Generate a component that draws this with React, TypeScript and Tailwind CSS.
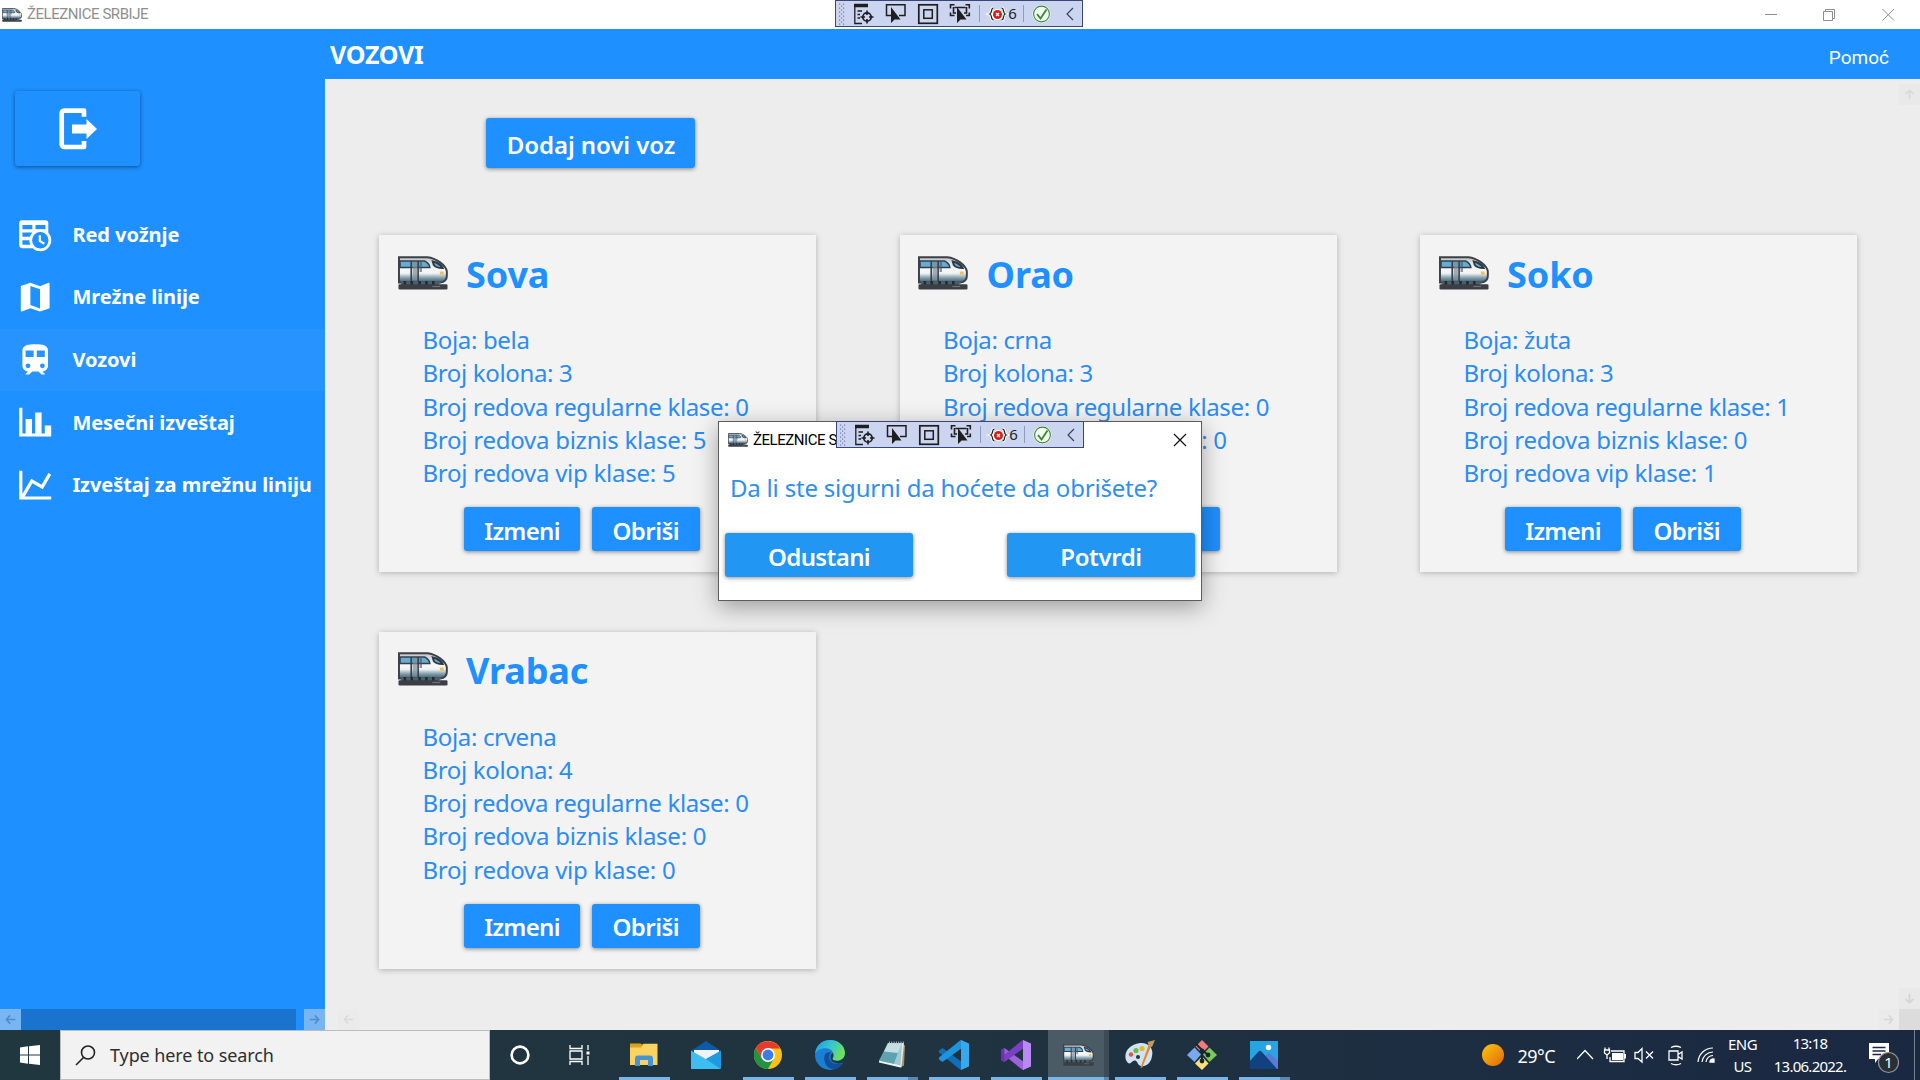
import React from "react";

function TrainIcon({ className }: { className: string }) {
  return (
    <svg className={className} viewBox="0 0 51 34" preserveAspectRatio="none">
      <defs>
        <linearGradient id="trainBody" x1="0" y1="0" x2="0" y2="1">
          <stop offset="0" stopColor="#b9bec4" />
          <stop offset="0.25" stopColor="#e4e7ea" />
          <stop offset="0.5" stopColor="#f7f7f7" />
          <stop offset="0.64" stopColor="#eef1f3" />
          <stop offset="0.82" stopColor="#7f9dab" />
          <stop offset="1" stopColor="#3f5a68" />
        </linearGradient>
      </defs>
      <path d="M1 1.200H30C39 2 49 9.500 49.800 15.500V20C49.800 23.500 47 26 43 26.500H1Z" fill="url(#trainBody)" stroke="#3d4046" strokeWidth="2" />
      <path d="M2 5H27C30 6 32.500 9 32.500 11.500H2Z" fill="#67acd3" stroke="#33414c" strokeWidth="1.600" />
      <path d="M35.500 5.500L39 6.500C42 8 44.500 10 45.500 12C42 12 38 11 36.500 9Z" fill="#6aaed6" stroke="#2b3a46" strokeWidth="2" />
      <path d="M13.500 5V25M20.500 5V25" stroke="#3a4048" strokeWidth="1.700" />
      <path d="M15 6H19.500V24H15Z" fill="#7b8f9b" opacity="0.700" />
      <path d="M22 6H24.500V16H22Z" fill="#47555f" opacity="0.600" />
      <path d="M42.500 15.500H46.500L47 18.800H43Z" fill="#f3c060" />
      <path d="M3 25.500H45L41 29H3Z" fill="#46606f" />
      <path d="M7 25V29.500M14 25V29.500M22 25V29.500M29 25V29.500M36 25V29.500" stroke="#252a30" strokeWidth="2.600" />
      <rect x="0.500" y="28.300" width="50" height="5.200" rx="1.200" fill="#3b3e43" />
      <path d="M35 30.500H43" stroke="#6d7278" strokeWidth="1.200" />
    </svg>
  );
}

function DebugBar() {
  return (
    <div className="flex h-[27px] w-[248px] border border-[#3b4678] bg-[#ccd5f0]">
      <svg width="246" height="25" viewBox="1 1 246 25" fill="none" stroke="#1e1e1e">
        <g fill="#6f7ba8" stroke="none">
          {[4, 8, 12, 16, 20, 24].map((y) => (
            <React.Fragment key={y}>
              <rect x="4" y={y - 0.5} width="1.200" height="1.200" />
              <rect x="8" y={y - 0.5} width="1.200" height="1.200" />
              {y < 24 && <rect x="6" y={y + 1.5} width="1.200" height="1.200" />}
            </React.Fragment>
          ))}
        </g>
        <path d="M19 5.500H33" strokeWidth="3.500" />
        <path d="M19.800 6V23.500H27M22.500 11H27M22.500 14.500H25M22.500 18H25" strokeWidth="1.300" />
        <circle cx="32" cy="17" r="4.200" strokeWidth="1.700" />
        <path d="M32 10.500V15M32 19V23.500M25.500 17H30M34 17H38.500" strokeWidth="1.600" />
        <path d="M56 15.500H51.500V4.700H70V15.500H64" strokeWidth="1.500" />
        <path d="M56 7V23L59.500 19.500H65.500Z" fill="#1e1e1e" stroke="none" />
        <rect x="83.800" y="4.800" width="18.500" height="18.500" strokeWidth="1.700" />
        <rect x="88.800" y="9.800" width="8.500" height="8.500" strokeWidth="1.500" />
        <path d="M115.500 8.500V4.700H119.500M130.500 4.700H134.300V8.500M115.500 12.500V15.500H119.500M134.300 12.500V15.500H131M119.500 7.500H130.500M118.500 7V13H121M131.500 7V13H129" strokeWidth="1.600" />
        <path d="M122 7V23L125.500 19.500H131.500Z" fill="#1e1e1e" stroke="none" />
        <path d="M144.500 5V22M188.500 5V22" stroke="#8c9ac4" strokeWidth="1" />
        <path d="M158.500 8C155.500 8 157.500 13 154.800 14C157.500 15 155.500 20 158.500 20M166.500 8C169.500 8 167.500 13 170.200 14C167.500 15 169.500 20 166.500 20" stroke="#fff" strokeWidth="3.200" />
        <path d="M158.500 8C155.500 8 157.500 13 154.800 14C157.500 15 155.500 20 158.500 20M166.500 8C169.500 8 167.500 13 170.200 14C167.500 15 169.500 20 166.500 20" strokeWidth="1.200" />
        <circle cx="162.500" cy="14.500" r="5.400" fill="#fff" stroke="none" />
        <circle cx="162.500" cy="14.500" r="4.500" fill="#d21f14" stroke="none" />
        <path d="M161 13L164 16M164 13L161 16" stroke="#fff" strokeWidth="1.300" />
        <circle cx="206.500" cy="14" r="9" fill="#fff" stroke="none" />
        <circle cx="206.500" cy="14" r="7.900" fill="#f4faf4" stroke="#388a34" strokeWidth="1.100" />
        <path d="M202 14L205.500 18.500L211.500 9.500" stroke="#388a34" strokeWidth="1.900" />
        <path d="M238 8L232 14L238 20" stroke="#3a4260" strokeWidth="1.200" />
        <text x="173.300" y="19.300" fontSize="15" fill="#1e1e1e" stroke="none" className="font-['Noto_Sans',sans-serif]">
          6
        </text>
      </svg>
    </div>
  );
}

const NAV = [
  { id: "clock", label: "Red vožnje" },
  { id: "map", label: "Mrežne linije" },
  { id: "train", label: "Vozovi", active: true },
  { id: "bar", label: "Mesečni izveštaj" },
  { id: "line", label: "Izveštaj za mrežnu liniju" },
];

const NAV_PATHS: Record<string, string> = {
  map: "M15,19L9,16.89V5L15,7.11M20.5,3C20.44,3 20.39,3 20.34,3L15,5.1L9,3L3.36,4.9C3.15,4.97 3,5.15 3,5.38V20.5A0.5,0.5 0 0,0 3.5,21C3.55,21 3.61,21 3.66,20.97L9,18.9L15,21L20.64,19.1C20.85,19 21,18.85 21,18.62V3.5A0.5,0.5 0 0,0 20.5,3Z",
  train:
    "M12,2C8,2 4,2.5 4,6V15.5A3.5,3.5 0 0,0 7.5,19L6,20.5V21H8.23L10.23,19H14L16,21H18V20.5L16.5,19A3.5,3.5 0 0,0 20,15.5V6C20,2.5 16.42,2 12,2M7.5,17A1.5,1.5 0 0,1 6,15.5A1.5,1.5 0 0,1 7.5,14A1.5,1.5 0 0,1 9,15.5A1.5,1.5 0 0,1 7.5,17M11,10H6V6H11V10M13,10V6H18V10H13M16.5,17A1.5,1.5 0 0,1 15,15.5A1.5,1.5 0 0,1 16.5,14A1.5,1.5 0 0,1 18,15.5A1.5,1.5 0 0,1 16.5,17Z",
  bar: "M22,21H2V3H4V19H6V10H10V19H12V6H16V19H18V14H22V21Z",
  line: "M16,11.78L20.24,4.45L21.97,5.45L16.74,14.5L10.23,10.75L5.46,19H22V21H2V3H4V17.54L9.5,8L16,11.78Z",
};

function NavIcon({ id }: { id: string }) {
  return (
    <svg className="size-[38.4px] shrink-0" viewBox="0 0 24 24" fill="#fff">
      {id === "clock" ? (
        <g transform="translate(0 -0.4)">
          <path
            fillRule="evenodd"
            d="M4 3H18.400A1.800 1.800 0 0 1 20.200 4.800V20.500H4A1.900 1.900 0 0 1 2 18.600V4.900A1.900 1.900 0 0 1 4 3ZM4 6V8.700H10.200V6ZM12.200 6V8.700H18.400V6ZM4 10.700V13.400H10.200V10.700ZM4 15.500V18.400H10.200V15.500Z"
          />
          <path d="M18 14H21V21H12V18Z" fill="#1e90ff" />
          <circle cx="15.200" cy="15.600" r="6" fill="#1e90ff" stroke="#fff" strokeWidth="1.700" />
          <path d="M14.900 12.500V16L17.700 17.700" fill="none" stroke="#fff" strokeWidth="1.400" />
        </g>
      ) : (
        <path d={NAV_PATHS[id]} />
      )}
    </svg>
  );
}

function Arrow({ dir, color }: { dir: "left" | "right" | "up" | "down"; color: string }) {
  const d = {
    left: "M15 8H2M7.500 2L2 8L7.500 14",
    right: "M1 8H14M8.500 2L14 8L8.500 14",
    up: "M8 15V2M2 7.500L8 2L14 7.500",
    down: "M8 1V14M2 8.500L8 14L14 8.500",
  }[dir];
  return (
    <svg className="size-[11px]" viewBox="0 0 16 16" fill="none" stroke={color} strokeWidth="2.200">
      <path d={d} />
    </svg>
  );
}

const TRAINS = [
  { name: "Sova", boja: "bela", kolona: 3, reg: 0, biz: 5, vip: 5 },
  { name: "Orao", boja: "crna", kolona: 3, reg: 0, biz: 0, vip: 0 },
  { name: "Soko", boja: "žuta", kolona: 3, reg: 1, biz: 0, vip: 1 },
  { name: "Vrabac", boja: "crvena", kolona: 4, reg: 0, biz: 0, vip: 0 },
];

const BTN =
  "flex items-center justify-center rounded-[3px] text-[24px] font-semibold text-white shadow-[0_1px_4px_rgba(0,0,0,0.45)]";

function Card({ t }: { t: (typeof TRAINS)[number] }) {
  return (
    <div className="flex h-[337px] w-[437px] flex-col bg-[#f3f3f3] text-[#1e90ff] shadow-[0_1px_6px_rgba(0,0,0,0.26)]">
      <div className="flex h-[88px] pl-[18.500px]">
        <TrainIcon className="mt-[20.500px] h-[34px] w-[50px]" />
        <h2 className="ml-[18.500px] mt-[15.500px] text-[36px] leading-[48px] font-bold tracking-[-0.1px]">{t.name}</h2>
      </div>
      <div className="pl-[43.500px] text-[24px] leading-[33.250px] tracking-[-0.34px] text-[#2a8cf4]">
        <p>Boja: {t.boja}</p>
        <p>Broj kolona: {t.kolona}</p>
        <p>Broj redova regularne klase: {t.reg}</p>
        <p className="tracking-[-0.25px]">Broj redova biznis klase: {t.biz}</p>
        <p className="tracking-[-0.25px]">Broj redova vip klase: {t.vip}</p>
      </div>
      <div className="mt-[17.750px] flex gap-3 pl-[85px]">
        <button className={`${BTN} h-[44px] w-[116px] bg-[#1e90ff] pt-[3px] tracking-[-0.7px]`}>Izmeni</button>
        <button className={`${BTN} h-[44px] w-[107.500px] bg-[#1e90ff] pt-[3px] tracking-[-0.5px]`}>Obriši</button>
      </div>
    </div>
  );
}

function AppIcon({ id }: { id: string }) {
  switch (id) {
    case "explorer":
      return (
        <svg width="30" height="30" viewBox="0 0 30 30">
          <path d="M1 6H12L14.500 3.800H28.500V25H1Z" fill="#fcd263" />
          <path d="M1 3.500H11.500L14 5L12 7.500H1Z" fill="#dfa01c" />
          <path d="M6 26V18.500A3 3 0 0 1 9 15.500H21A3 3 0 0 1 24 18.500V26H19V20H11V26Z" fill="#4595d2" />
        </svg>
      );
    case "mail":
      return (
        <svg width="30" height="30" viewBox="0 0 30 30">
          <path d="M0 11L15 1L30 11Z" fill="#0d5ba8" />
          <path d="M3 10H28V22H3Z" fill="#f1f2f4" />
          <path d="M30 10.500L13 20L30 29Z" fill="#1f9ae0" />
          <path d="M0 10.500L13 18L30 29H0Z" fill="#3dbef3" />
        </svg>
      );
    case "chrome":
      return (
        <svg width="28" height="28" viewBox="0 0 48 48">
          <circle cx="24" cy="24" r="24" fill="#fbc116" />
          <path d="M3.200 12A24 24 0 0 0 24 48L34 30L24 24L13.600 30Z" fill="#229342" />
          <path d="M3.200 12L13.600 30L24 13H44.800A24 24 0 0 0 3.200 12Z" fill="#e33b2e" />
          <circle cx="24" cy="24" r="12" fill="#fff" />
          <circle cx="24" cy="24" r="9.300" fill="#3a7de8" />
        </svg>
      );
    case "edge":
      return (
        <svg width="30" height="30" viewBox="0 0 30 30">
          <defs>
            <linearGradient id="edgeTop" x1="0" y1="0" x2="1" y2="0.400">
              <stop offset="0.100" stopColor="#1fa2e0" />
              <stop offset="0.550" stopColor="#35c6d0" />
              <stop offset="1" stopColor="#6ee05a" />
            </linearGradient>
          </defs>
          <circle cx="15" cy="15" r="15" fill="#1c7fd4" />
          <path d="M0 14C1 5 7 0 15 0C24 0 30 6 30 13C30 18 26 20.500 22 20.500C19 20.500 17 19.500 17.500 18C19.500 16 19 10 13 8.500C7 7.500 2 10 0 14Z" fill="url(#edgeTop)" />
          <path d="M9.500 16C8 23 13 30 20 29C24 28 27 25 28.500 22.500C24 25 18 24.500 15 20.500C13.500 18 14 14.500 16 12.500C13 11.500 10 13 9.500 16Z" fill="#104f9c" />
          <path d="M17.500 18.500C17 20 19 21 22 21C26 21 29 18.500 30 15V20.500L28.500 22.500C23 25 18 23 16 20C15 17 15.500 14 17.800 13C18.800 15 18.700 17 17.500 18.500Z" fill="#21373f" />
        </svg>
      );
    case "notepad":
      return (
        <svg width="30" height="30" viewBox="0 0 30 30">
          <path d="M25 4L28 5.500L27 25.500L24 27Z" fill="#b08e64" />
          <path d="M14 3H27L24.500 27.500L12 24Z" fill="#dfe9ea" />
          <path d="M11 3H25L17 24.500L2 20.500Z" fill="#5fa3b0" />
          <path d="M11 3H25L21 13L7 11.500Z" fill="#c3dfe3" />
          <path d="M21 13L25 4L23.500 26L17 24Z" fill="#9fcad1" />
          <path d="M2 20.500L23.500 25.500V27.500L2 22.500Z" fill="#eef3f3" />
          <path d="M12 2.500H27" stroke="#b5b9bb" strokeWidth="2" strokeDasharray="1 1.300" />
        </svg>
      );
    case "vscode":
    case "vs": {
      const c = id === "vs" ? ["#9c63dc", "#7a3fc4", "#b988f2"] : ["#0f6fb8", "#1f94dd", "#38a8ec"];
      return (
        <svg width="30" height="30" viewBox="0 0 30 30">
          <path d="M0 10.500L3.500 8L23 22V30L21 29.500L0 12.500Z" fill={c[0]} />
          <path d="M0 19.500L3.500 22L23 8V0L21 0.500L0 17.500Z" fill={c[1]} />
          {id === "vs" && <path d="M0 9.500L3.500 8V22L0 20.500Z" fill="#6a34ac" />}
          <path d="M22 0L30 3.500V26.500L22 30Z" fill={c[2]} />
        </svg>
      );
    }
    case "train":
      return <TrainIcon className="h-[22px] w-[31px]" />;
    case "paint":
      return (
        <svg width="30" height="30" viewBox="0 0 30 30">
          <path d="M15 3C23 2 29 8 27 16C26 24 20 27 16 26C12 25 13 21 10 20.500C7 20 6 25 3 23C-1 19 0 13 3 9C6 5.500 10 3.500 15 3Z" fill="#cfe3f2" />
          <circle cx="11" cy="10.500" r="2.600" fill="#6fba47" />
          <circle cx="17" cy="8.500" r="2.600" fill="#e8b92f" />
          <circle cx="6" cy="14.500" r="2.200" fill="#e0553d" />
          <circle cx="13" cy="17" r="2" fill="#1f3542" />
          <path d="M26.500 5L17 28L15.500 27.500L24 4Z" fill="#e08a2b" />
          <path d="M22.500 2L30 0L27 7L24 6Z" fill="#c49a63" />
        </svg>
      );
    case "git":
      return (
        <svg width="30" height="30" viewBox="0 0 30 30">
          <path d="M15 0L21.500 6.500L15 13L8.500 6.500Z" fill="#f27b7b" />
          <path d="M7.500 7.500L14 14.500L7.500 22L0 15Z" fill="#79a9ee" />
          <path d="M22.500 7.500L30 15L22.500 22L16 14.500Z" fill="#7cc957" />
          <path d="M15 16.500L21.500 23.500L15 30L8 23.500Z" fill="#f9e07a" />
          <path d="M9 4L15 10V22M15 10L21 15" stroke="#17262f" strokeWidth="2" fill="none" />
          <circle cx="15" cy="11" r="2.400" fill="#17262f" />
          <circle cx="21" cy="15" r="2.400" fill="#17262f" />
          <circle cx="15" cy="21" r="2.400" fill="#17262f" />
        </svg>
      );
    default:
      return (
        <svg width="28" height="28" viewBox="0 0 28 28">
          <rect width="28" height="28" fill="#27a4e4" />
          <path d="M12 18L19 11.500L28 20V28H12Z" fill="#5b7ad6" />
          <path d="M0 20L8.500 10.500C9.500 9.500 10.500 9.500 11.500 10.500L27 28H0Z" fill="#11417f" />
          <circle cx="18.500" cy="6.500" r="2.700" fill="#fff" />
        </svg>
      );
  }
}

const TASKS = [
  { id: "explorer" },
  { id: "mail", none: true },
  { id: "chrome" },
  { id: "edge" },
  { id: "notepad", multi: true },
  { id: "vscode" },
  { id: "vs" },
  { id: "train", active: true },
  { id: "paint" },
  { id: "git" },
  { id: "photos", multi: true },
] as { id: string; none?: boolean; multi?: boolean; active?: boolean }[];

function Taskbar() {
  return (
    <footer className="flex h-[50px] w-full bg-linear-to-r from-[#21373f] via-[#1f3340] to-[#1a2842] text-white">
      <div className="flex w-[60px] items-center justify-center">
        <svg width="20" height="20" viewBox="0 0 20 20" fill="#fff">
          <path d="M0 2.400L8 1.300V9.500H0ZM9 1.200L20 0V9.500H9ZM0 10.500H8V18.700L0 17.600ZM9 10.500H20V20L9 18.800Z" />
        </svg>
      </div>
      <div className="flex w-[430px] items-center border border-[#bdbdbd] bg-[#f2f2f2] pl-[14px]">
        <svg width="21" height="21" viewBox="0 0 21 21" fill="none" stroke="#222" strokeWidth="1.600">
          <circle cx="13" cy="7.500" r="6.500" />
          <path d="M8.500 12.500L1 20" />
        </svg>
        <span className="ml-[14px] text-[18px] tracking-[-0.1px] text-[#2e2e2e]">Type here to search</span>
      </div>
      <div className="flex w-[60px] items-center justify-center">
        <svg width="20" height="20" viewBox="0 0 20 20">
          <circle cx="10" cy="10" r="8.400" fill="none" stroke="#fff" strokeWidth="2.600" />
        </svg>
      </div>
      <div className="flex w-[60px] items-center justify-center">
        <svg width="22" height="20" viewBox="0 0 22 20" fill="none" stroke="#fff" strokeWidth="1.300">
          <path d="M1 0V3.500H13V0M1 20V16.500H13V20M1 6H13V14H1ZM19 0V5M19 11V20" />
          <rect x="17.500" y="6.500" width="3" height="3" fill="#fff" stroke="none" />
        </svg>
      </div>
      <div className="ml-[3px] flex">
        {TASKS.map((t) => (
          <div key={t.id} className="flex w-[62px] flex-col">
            <div
              className={
                t.active
                  ? "ml-px flex h-[47px] w-[61px] items-center justify-center border-r-[5px] border-[#3c4b56] bg-[#4b5b66] pl-[4px] pt-[3px]"
                  : "flex h-[47px] items-center justify-center pt-[3px]"
              }
            >
              <AppIcon id={t.id} />
            </div>
            {!t.none && (
              <div className="flex h-[3px] justify-center">
                <div className={t.active ? "w-[56px] bg-[#76b6ea]" : t.multi ? "w-[41px] bg-[#76b6ea]" : "w-[51px] bg-[#76b6ea]"} />
                {(t.multi || t.active) && <div className={t.active ? "w-[5px] bg-[#5587b0]" : "w-[10px] bg-[#5a88b0]"} />}
              </div>
            )}
          </div>
        ))}
      </div>
      <div className="ml-auto flex items-center">
        <div className="size-[22px] rounded-full bg-linear-to-br from-[#fdc60d] to-[#e0640a]" />
        <span className="ml-[14px] mt-[3px] w-[59px] text-[18px] tracking-[-0.5px]">29°C</span>
        <svg width="138" height="24" viewBox="0 0 138 24" fill="none" stroke="#fff" strokeWidth="1.300">
          <path d="M0 16L8 7.500L16 16" />
          <path d="M34 8H47V18.500H33V14" />
          <path d="M35 10H46V17H35Z" fill="#fff" stroke="none" />
          <path d="M48 11V15.500" strokeWidth="2" />
          <path d="M28 7V4.500M32 7V4.500M27.500 7H32.500V10L30 12L27.500 10ZM30 12V16" />
          <path d="M58 9.500H61L65 5.500V19L61 15.500H58ZM69 8.500L76 15.500M76 8.500L69 15.500" />
          <path d="M92 8H101V17H92ZM101 11.500L105 9V16L101 13.500M94 4.500Q99 2 104 4.500M94 20.500Q99 23 104 20.500" />
          <path d="M121 19A15 15 0 0 1 136 5M125 19A11 11 0 0 1 136 9M129 19A7 7 0 0 1 136 12.500" strokeWidth="1.200" />
          <path d="M133 19A3 3 0 0 1 137 16V19Z" fill="#fff" />
        </svg>
        <div className="ml-[3px] w-[50px] text-center text-[15px] leading-[22.500px] tracking-[-0.5px]">
          <div>ENG</div>
          <div>US</div>
        </div>
        <div className="ml-[2.500px] w-[80px] text-center text-[15px] leading-[23px] tracking-[-0.75px]">
          <div>13:18</div>
          <div>13.06.2022.</div>
        </div>
        <svg className="ml-[17px] mt-1" width="32" height="34" viewBox="0 0 32 34">
          <path d="M2 3H22V19H11L8 23V19H2Z" fill="#fff" />
          <path d="M5.500 7.500H18.500M5.500 11H18.500M5.500 14.500H14" stroke="#1b2a40" strokeWidth="1.400" />
          <circle cx="21.500" cy="22.500" r="10" fill="#2a2f36" stroke="#8d949c" strokeWidth="1.200" />
          <text x="21.500" y="28" textAnchor="middle" fontSize="15" fill="#fff">
            1
          </text>
        </svg>
        <div className="ml-[15px] mr-[5px] h-[50px] w-px bg-[#75808f]" />
      </div>
    </footer>
  );
}

export default function App() {
  return (
    <div className="relative flex h-[1080px] w-[1920px] flex-col overflow-hidden bg-white font-['Noto_Sans',sans-serif]">
      <div className="flex h-[29px] items-center pl-[2px]">
        <TrainIcon className="h-[14px] w-[20px]" />
        <span className="ml-[5px] font-[Roboto,sans-serif] text-[15px] tracking-[-0.45px] text-[#8e8e8e]">ŽELEZNICE SRBIJE</span>
        <svg className="ml-auto mr-[25px]" width="130" height="14" viewBox="0 0 130 14" fill="none" stroke="#8c8c8c">
          <path d="M0 6.500H12M117.500 1L129 12.500M129 1L117.500 12.500" />
          <path d="M58.500 3.500H67.500V12.500H58.500ZM60.500 3V1.500H69.500V10.500H68" />
        </svg>
      </div>

      <div className="flex h-[1001px]">
        <aside className="flex w-[325px] flex-col bg-[#1e90ff]">
          <button className="ml-[15px] mt-[62px] flex h-[75px] w-[125px] rounded-[3px] shadow-[0_1px_4px_rgba(0,0,0,0.45)]">
            <svg className="ml-[44px] mt-[16px]" width="40" height="44" viewBox="0 0 40 44">
              <path d="M25 9.700V3.600H5.500A3 3 0 0 0 2.700 6.500V37A3 3 0 0 0 5.500 40H25V34" fill="none" stroke="#fff" strokeWidth="4.700" strokeLinejoin="round" />
              <path d="M13 17.500H27.500V12L38 22L27.500 32V26.500H13Z" fill="#fff" />
            </svg>
          </button>
          <nav className="mt-[37.500px] flex flex-col">
            {NAV.map((n) => (
              <div
                key={n.id}
                className={
                  n.active
                    ? "flex h-[62.600px] items-center bg-[#2693ff] pl-[16px]"
                    : "flex h-[62.600px] items-center pl-[16px]"
                }
              >
                <NavIcon id={n.id} />
                <span className="ml-[18px] whitespace-nowrap text-[20px] font-bold tracking-[-0.05px] text-white">
                  {n.label}
                </span>
              </div>
            ))}
          </nav>
          <div className="mt-auto flex h-[21px] justify-between">
            <div className="flex w-[21px] items-center justify-center bg-[#77b5f3]">
              <Arrow dir="left" color="#4b8cc9" />
            </div>
            <div className="mr-[8px] flex-1 bg-[#1a73cc]" />
            <div className="flex w-[21px] items-center justify-center bg-[#77b5f3]">
              <Arrow dir="right" color="#4b8cc9" />
            </div>
          </div>
        </aside>

        <div className="flex flex-1 flex-col">
          <header className="flex h-[50px] items-center justify-between bg-[#1e90ff] pl-[5px] pr-[31px] text-white">
            <h1 className="mt-px text-[25px] font-bold tracking-[-0.3px]">VOZOVI</h1>
            <span className="mt-[9px] font-[Roboto,sans-serif] text-[19px]">Pomoć</span>
          </header>
          <main className="flex flex-1 bg-[#ededed]">
            <div className="flex flex-1 flex-col">
              <button className={`${BTN} ml-[161px] mt-[39px] h-[50px] w-[209px] shrink-0 bg-[#1e90ff] pl-px pt-[3px] tracking-[-0.08px]`}>
                Dodaj novi voz
              </button>
              <div className="ml-[54px] mt-[67px] grid grid-cols-[437px_437px_437px] gap-x-[83.500px] gap-y-[59.500px]">
                {TRAINS.map((t) => (
                  <Card key={t.name} t={t} />
                ))}
              </div>
              <div className="mt-auto flex h-[21px] justify-between pl-[13px]">
                <div className="flex w-[21px] items-center justify-center bg-[#ebebeb]">
                  <Arrow dir="left" color="#dadada" />
                </div>
                <div className="flex w-[21px] items-center justify-center bg-[#ebebeb]">
                  <Arrow dir="right" color="#d6d6d6" />
                </div>
              </div>
            </div>
            <div className="flex w-[21px] flex-col pt-[5px]">
              <div className="flex h-[21px] items-center justify-center bg-[#e9e9e9]">
                <Arrow dir="up" color="#d8d8d8" />
              </div>
              <div className="mt-auto flex h-[21px] items-center justify-center bg-[#e9e9e9]">
                <Arrow dir="down" color="#d4d4d4" />
              </div>
              <div className="h-[21px] bg-[#dcdcdc]" />
            </div>
          </main>
        </div>
      </div>

      <Taskbar />

      <div className="absolute left-[835px] top-0">
        <DebugBar />
      </div>

      <div className="absolute left-[718px] top-[421px] flex h-[180px] w-[484px] flex-col border border-[#5c5c5c] bg-white shadow-[0_6px_22px_rgba(0,0,0,0.35)]">
        <div className="flex h-[36px] items-center pl-[9px] pr-[14px]">
          <TrainIcon className="h-[14px] w-[20px]" />
          <span className="ml-[5px] whitespace-nowrap font-[Roboto,sans-serif] text-[15px] tracking-[-0.45px] text-black">
            ŽELEZNICE SRBIJE
          </span>
          <svg className="ml-auto" width="14" height="14" viewBox="0 0 14 14" stroke="#111" strokeWidth="1.200">
            <path d="M1 1L13 13M13 1L1 13" />
          </svg>
        </div>
        <p className="mt-[14px] whitespace-nowrap pl-[11px] text-[24px] leading-[32px] tracking-[-0.2px] text-[#2f8ff0]">
          Da li ste sigurni da hoćete da obrišete?
        </p>
        <div className="mt-[29px] flex justify-between px-[6px]">
          <button className={`${BTN} h-[44px] w-[188px] bg-[#2196f3] pt-[3px] tracking-[-0.6px]`}>Odustani</button>
          <button className={`${BTN} h-[44px] w-[188px] bg-[#2196f3] pt-[3px] tracking-[-0.4px]`}>Potvrdi</button>
        </div>
        <div className="absolute left-[117px] top-[-1px]">
          <DebugBar />
        </div>
      </div>
    </div>
  );
}
